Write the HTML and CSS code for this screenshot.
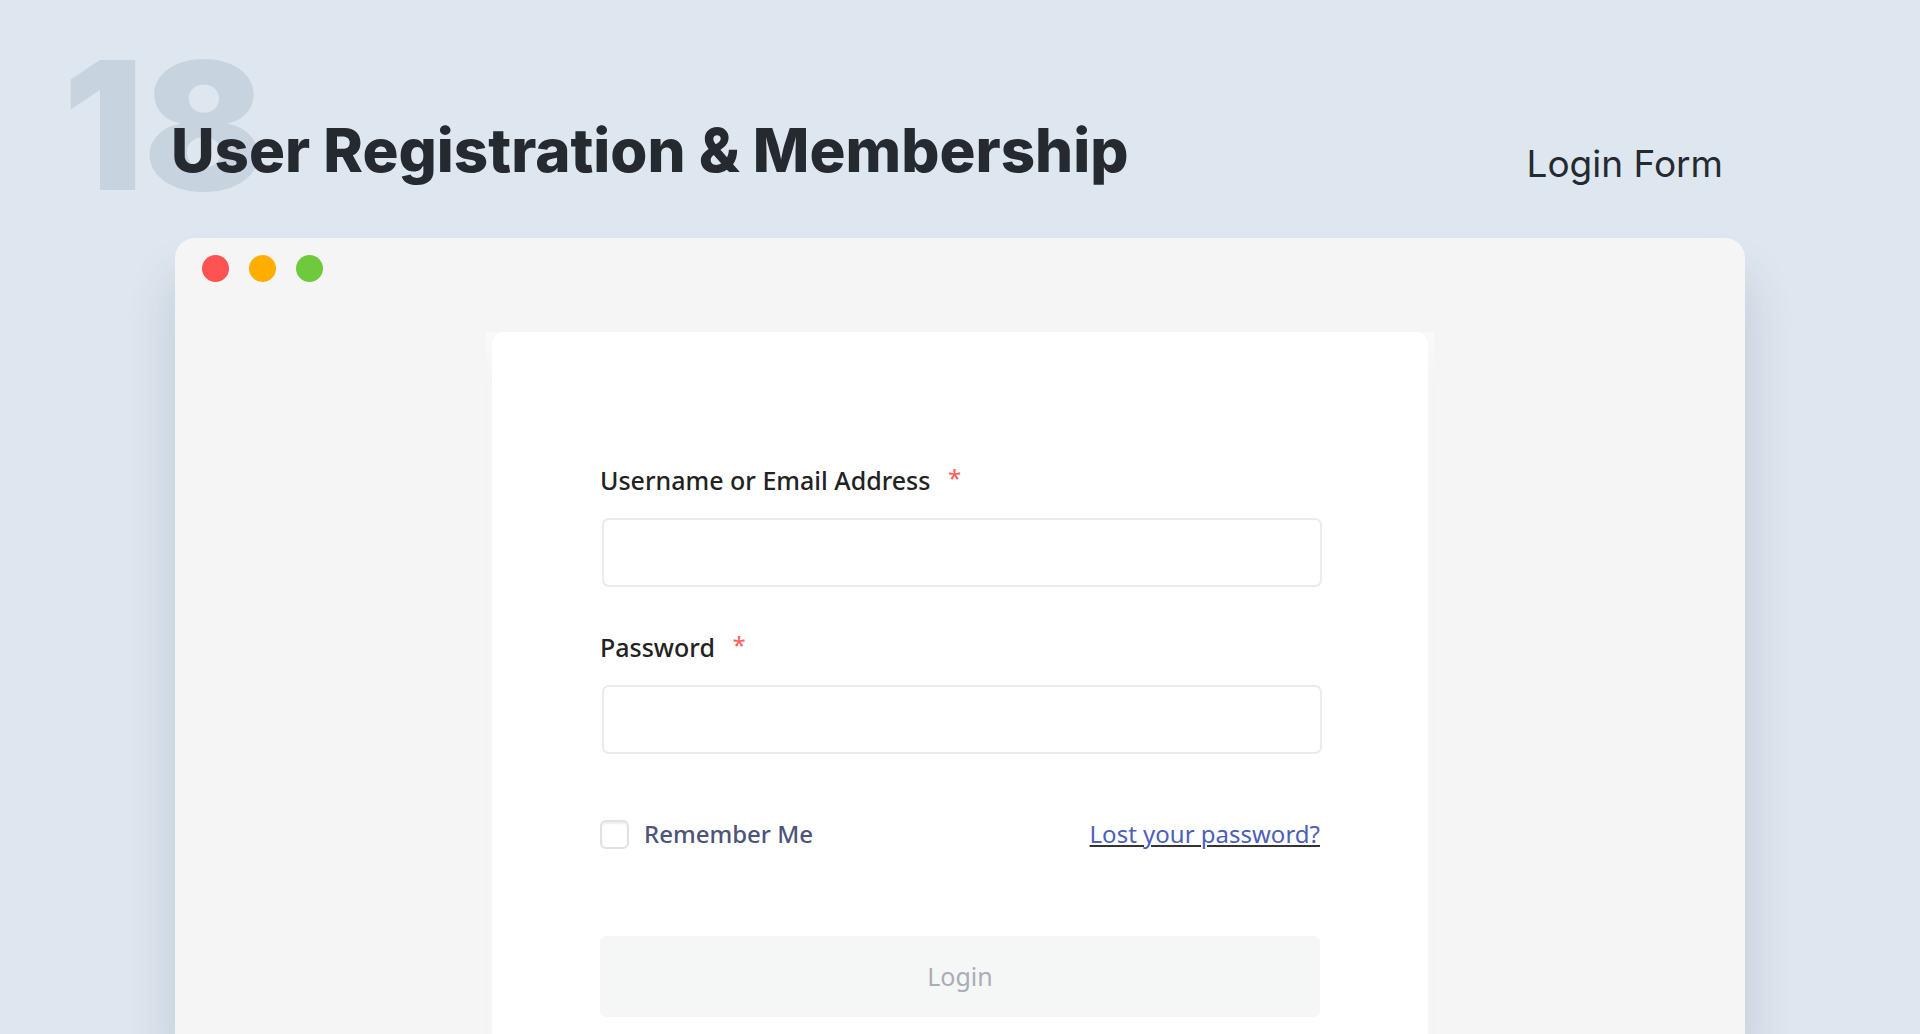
FILE: index.html
```html
<!DOCTYPE html>
<html lang="en">
<head>
<meta charset="utf-8">
<meta name="viewport" content="width=device-width, initial-scale=1">
<title>User Registration &amp; Membership – Login Form</title>
<link rel="stylesheet" href="styles.css">
</head>
<body>
<div class="page">
  <header class="header">
    <span class="number" aria-hidden="true">18</span>
    <h1 class="title">User Registration &amp; Membership</h1>
    <p class="subtitle">Login Form</p>
  </header>
  <main class="window">
    <div class="dots" aria-hidden="true">
      <span class="dot dot-red"></span>
      <span class="dot dot-yellow"></span>
      <span class="dot dot-green"></span>
    </div>
    <div class="halo">
      <form class="card">
        <div class="field">
          <label class="label" for="username">Username or Email Address <span class="required">*</span></label>
          <input class="input" id="username" name="username" type="text">
        </div>
        <div class="field">
          <label class="label" for="password">Password <span class="required">*</span></label>
          <input class="input" id="password" name="password" type="password">
        </div>
        <div class="options">
          <label class="remember" for="remember"><input class="checkbox" id="remember" type="checkbox">Remember Me</label>
          <a class="lost" href="#">Lost your password?</a>
        </div>
        <button class="login" type="submit">Login</button>
      </form>
    </div>
  </main>
</div>
</body>
</html>
```
FILE: styles.css
```css
* {
  box-sizing: border-box;
}

body {
  margin: 0;
  background: #dee6ef;
  color: #252a31;
  font-family: "Noto Sans", "Open Sans", sans-serif;
}

.page {
  display: flex;
  flex-direction: column;
  min-height: 100vh;
  padding: 0 175px;
  overflow: hidden;
}

.header {
  position: relative;
  display: flex;
  align-items: flex-start;
  justify-content: space-between;
  height: 238px;
  padding: 114px 22px 0 0;
  font-family: Inter, sans-serif;
}

.number {
  position: absolute;
  top: 20px;
  left: -112px;
  color: #c7d3df;
  font-size: 178px;
  font-weight: 900;
  line-height: 212px;
}

.title {
  position: relative;
  margin: 0 0 0 -4px;
  font-size: 60px;
  font-weight: 800;
  line-height: 72px;
}

.subtitle {
  margin: 0;
  padding-top: 26px;
  font-size: 37px;
  line-height: 48px;
}

.window {
  display: flex;
  flex: 1;
  flex-direction: column;
  background: #f5f5f5;
  border-radius: 20px 20px 0 0;
  box-shadow: 0 40px 48px rgba(60, 85, 110, 0.2);
}

.dots {
  display: flex;
  gap: 20px;
  padding: 17px 27px 50px;
}

.dot {
  width: 27px;
  height: 27px;
  border-radius: 50%;
}

.dot-red {
  background: #ff5252;
}

.dot-yellow {
  background: #ffae00;
}

.dot-green {
  background: #6eca3c;
}

.halo {
  display: flex;
  flex: 1;
  width: 100%;
  max-width: 948px;
  margin: 0 auto;
  padding: 0 6px;
  background: linear-gradient(#fafafa, #f4f4f4 48px);
}

.card {
  display: flex;
  flex: 1;
  flex-direction: column;
  padding: 128px 108px 16px;
  background: #fff;
  border-radius: 12px 12px 0 0;
}

.field {
  display: flex;
  flex-direction: column;
  gap: 18px;
  margin-bottom: 40px;
}

.label {
  color: #222;
  font-size: 25px;
  font-weight: 500;
  line-height: 40px;
}

.required {
  margin-left: 11px;
  color: #ff5c5c;
  font-size: 24px;
  font-weight: 400;
  line-height: 24px;
  vertical-align: 3px;
}

.input {
  height: 69px;
  margin: 0 -2px 0 2px;
  padding: 0 20px;
  border: 2px solid #ebebeb;
  border-radius: 7px;
  background: #fff;
  font: inherit;
  font-size: 25px;
}

.options {
  display: flex;
  align-items: center;
  justify-content: space-between;
  margin: 20px 0 82px;
  font-size: 24px;
  line-height: 40px;
}

.remember {
  display: flex;
  align-items: center;
  gap: 15px;
  color: #4c5477;
  font-weight: 500;
}

.checkbox {
  width: 29px;
  height: 29px;
  margin: 0;
  appearance: none;
  border: 2px solid #e1e1e1;
  border-radius: 6px;
  background: #fff;
  box-shadow: inset 0 2px 2px #eee;
}

.lost {
  color: #4c60b8;
  text-decoration-color: #333;
  text-decoration-thickness: 2px;
  text-underline-offset: 2px;
}

.login {
  height: 81px;
  padding: 0 0 2px;
  border: 0;
  border-radius: 6px;
  background: #f5f7f7;
  color: #a9adb5;
  font: inherit;
  font-size: 25px;
}
```
